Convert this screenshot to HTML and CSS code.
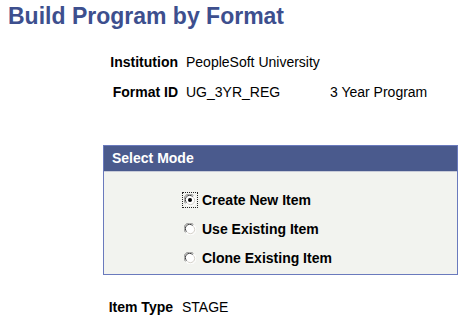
FILE: index.html
```html
<!DOCTYPE html>
<html>
<head><meta charset="utf-8"><link rel="stylesheet" href="styles.css"></head>
<body>
<div class="page">
  <h1 class="title">Build Program by Format</h1>
  <div class="fields">
    <div class="row"><span class="lbl">Institution</span><span class="val">PeopleSoft University</span></div>
    <div class="row"><span class="lbl">Format ID</span><span class="val id">UG_3YR_REG</span><span class="val">3 Year Program</span></div>
  </div>
  <div class="box">
    <div class="box-head">Select Mode</div>
    <div class="box-body">
      <div class="opt"><span class="radio focus"><svg width="12" height="12" viewBox="0 0 12 12"><circle cx="6" cy="6" r="5.5" fill="#fff"/><path d="M1.6 9.4 A5 5 0 0 1 9.4 1.6" fill="none" stroke="#808080" stroke-width="1"/><path d="M2.6 8.6 A4 4 0 0 1 8.6 2.6" fill="none" stroke="#404040" stroke-width="1"/><path d="M10.4 2.6 A5 5 0 0 1 2.6 10.4" fill="none" stroke="#fff" stroke-width="1"/><path d="M9.4 3.4 A4 4 0 0 1 3.4 9.4" fill="none" stroke="#d4d0c8" stroke-width="1"/><circle cx="6" cy="6" r="2" fill="#000"/></svg></span>Create New Item</div>
      <div class="opt"><span class="radio"><svg width="12" height="12" viewBox="0 0 12 12"><circle cx="6" cy="6" r="5.5" fill="#fff"/><path d="M1.6 9.4 A5 5 0 0 1 9.4 1.6" fill="none" stroke="#808080" stroke-width="1"/><path d="M2.6 8.6 A4 4 0 0 1 8.6 2.6" fill="none" stroke="#404040" stroke-width="1"/><path d="M10.4 2.6 A5 5 0 0 1 2.6 10.4" fill="none" stroke="#fff" stroke-width="1"/><path d="M9.4 3.4 A4 4 0 0 1 3.4 9.4" fill="none" stroke="#d4d0c8" stroke-width="1"/></svg></span>Use Existing Item</div>
      <div class="opt"><span class="radio"><svg width="12" height="12" viewBox="0 0 12 12"><circle cx="6" cy="6" r="5.5" fill="#fff"/><path d="M1.6 9.4 A5 5 0 0 1 9.4 1.6" fill="none" stroke="#808080" stroke-width="1"/><path d="M2.6 8.6 A4 4 0 0 1 8.6 2.6" fill="none" stroke="#404040" stroke-width="1"/><path d="M10.4 2.6 A5 5 0 0 1 2.6 10.4" fill="none" stroke="#fff" stroke-width="1"/><path d="M9.4 3.4 A4 4 0 0 1 3.4 9.4" fill="none" stroke="#d4d0c8" stroke-width="1"/></svg></span>Clone Existing Item</div>
    </div>
  </div>
  <div class="row item"><span class="lbl">Item Type</span><span class="val">STAGE</span></div>
</div>
</body>
</html>
```
FILE: styles.css
```css
html, body { margin: 0; padding: 0; background: #fff; }
body { font-family: "Liberation Sans", Arial, sans-serif; color: #000; }
.page { width: 464px; height: 320px; overflow: hidden; }
.title { margin: 0; padding: 2px 0 0 8px; font-size: 23px; font-weight: bold; color: #3d4f8e; line-height: 28px; height: 28px; }
.fields { padding-top: 17px; }
.row { display: flex; height: 30px; font-size: 14px; line-height: 30px; }
.lbl { font-weight: bold; width: 178px; flex: none; text-align: right; box-sizing: border-box; padding-right: 0; margin-right: 8px; }
.val { color: #000; white-space: nowrap; }
.val.id { width: 144px; flex: none; }
.box { margin: 38px 0 0 103px; width: 353px; border: 1px solid #6a7abd; background: #f2f3ef; }
.box-head { background: #4a5a8d; color: #fff; font-weight: bold; font-size: 14px; height: 25px; line-height: 25px; padding-left: 8px; border-bottom: 1px solid #c8cbd8; }
.box-body { padding: 13px 0 2px 80px; }
.opt { display: flex; align-items: center; height: 29px; font-size: 14px; font-weight: bold; color: #000; }
.radio { width: 12px; height: 12px; margin-right: 6px; display: inline-flex; flex: none; }
.radio svg { display: block; }
.radio.focus { outline: 1px dotted #222; outline-offset: 1px; }
.item { margin-top: 17px; }
.item .lbl { width: 173px; margin-right: 9px; }
```
